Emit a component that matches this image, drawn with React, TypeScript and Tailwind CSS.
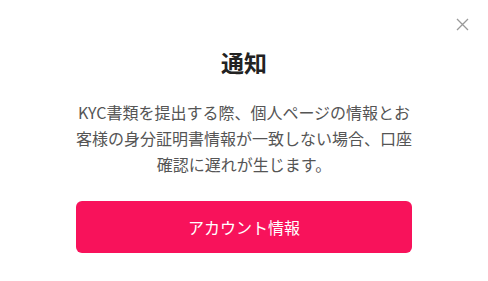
import React from 'react';

const App: React.FC = () => {
  return (
    <div
      className="relative flex h-[281px] w-[488px] flex-col items-center bg-white"
      style={{ fontFamily: '"Noto Sans CJK JP", "Noto Sans", sans-serif' }}
    >
      <button className="absolute right-[19px] top-[17px] flex h-[14px] w-[14px] items-center justify-center text-[#999]">
        <svg width="13" height="13" viewBox="0 0 13 13" fill="none" stroke="currentColor" strokeWidth="1.3">
          <path d="M1 1L12 12M12 1L1 12" />
        </svg>
      </button>

      <h2 className="mt-[46px] text-[23px] font-bold leading-[32px] text-[#222]">通知</h2>

      <p className="mt-[21px] w-[338px] text-center text-[16px] leading-[26px] text-[#555]">
        KYC書類を提出する際、個人ページの情報とお客様の身分証明書情報が一致しない場合、口座確認に遅れが生じます。
      </p>

      <button className="mt-[24px] flex h-[52px] w-[336px] items-center justify-center rounded-[6px] bg-[#f8125b] text-[16px] text-white">
        アカウント情報
      </button>
    </div>
  );
};

export default App;
